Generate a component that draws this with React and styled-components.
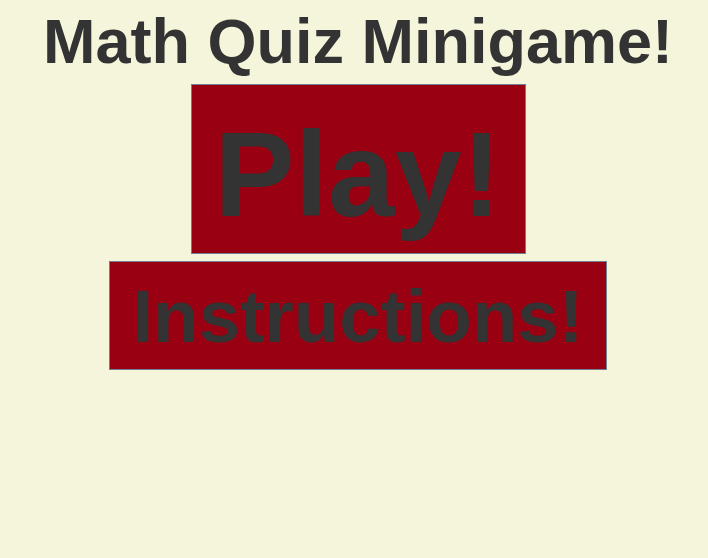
import styled, { createGlobalStyle } from "styled-components";

const GlobalStyle = createGlobalStyle`
  html, body {
    margin: 0;
    padding: 0;
    background: #f5f5dc;
  }
  body {
    font-family: "Liberation Sans", Arial, sans-serif;
    color: #333333;
  }
`;

const Page = styled.main`
  box-sizing: border-box;
  min-height: 558px;
  padding: 5px 0 0 8px;
  display: flex;
  flex-direction: column;
  align-items: center;
  gap: 7px;
`;

const Title = styled.h1`
  margin: 0;
  font-size: 63px;
  font-weight: 700;
  line-height: normal;
  color: #333333;
`;

const MenuButton = styled.button`
  box-sizing: border-box;
  margin: 0;
  font-family: "Liberation Sans", Arial, sans-serif;
  font-weight: 700;
  font-size: ${(p) => p.$size}px;
  line-height: normal;
  color: #333333;
  background: #990011;
  border: 1px solid #708090;
  width: ${(p) => p.$width}px;
  height: ${(p) => p.$height}px;
  padding: ${(p) => p.$padTop}px 0 0;
  display: flex;
  align-items: flex-start;
  justify-content: center;
  cursor: pointer;
`;

const App = () => {
  return (
    <>
      <GlobalStyle />
      <Page>
        <Title>Math Quiz Minigame!</Title>
        <MenuButton $size={120} $width={335} $height={170} $padTop={20}>
          Play!
        </MenuButton>
        <MenuButton $size={74.5} $width={498} $height={109} $padTop={12}>
          Instructions!
        </MenuButton>
      </Page>
    </>
  );
};

export default App;
